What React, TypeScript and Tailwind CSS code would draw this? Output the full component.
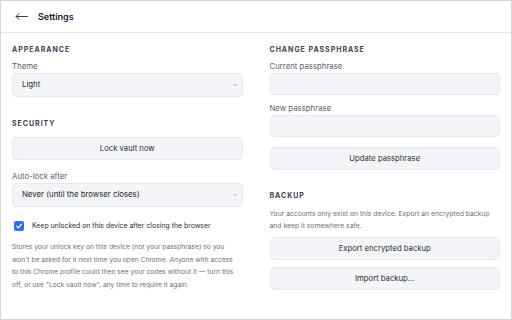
import { ChevronDown } from "lucide-react";

const heading = "text-[7px] font-bold uppercase tracking-[0.14em] leading-[10px] text-[#3d4152]";
const label = "text-[7.8px] leading-[10px] text-[#5b5f6c]";
const field = "w-full rounded-[5px] border border-[#e7e9f0] bg-[#f4f5f9]";
const button =
  "flex h-[23px] w-full items-center justify-center rounded-[5px] border border-[#e7e9f0] bg-[#f4f5f9] text-[7.7px] text-[#2b2e38]";

function Select({ value }: { value: string }) {
  return (
    <div className={`${field} flex h-[24px] items-center justify-between pl-[9px] pr-[4px]`}>
      <span className="text-[7.8px] text-[#23262f]">{value}</span>
      <ChevronDown className="h-[6px] w-[6px] text-[#6b6f7b]" strokeWidth={2} />
    </div>
  );
}

export default function App() {
  return (
    <div
      className="flex h-[320px] w-[512px] flex-col overflow-hidden border border-[#d6d6da] bg-white"
      style={{ fontFamily: "Inter, 'Liberation Sans', sans-serif" }}
    >
      <header className="flex h-[32px] shrink-0 items-center border-b border-[#e6e7ef] pl-[14px]">
        <svg viewBox="0 0 13 7" className="h-[7px] w-[13px]" fill="none">
          <path d="M12.5 3.5H1M4 0.8 1 3.5 4 6.2" stroke="#2a2d3a" strokeWidth="0.9" strokeLinecap="round" strokeLinejoin="round" />
        </svg>
        <h1 className="ml-[10px] text-[9px] font-semibold text-[#1d2030]">Settings</h1>
      </header>

      <main className="grid grid-cols-2 gap-[27px] px-[11px] pt-[12px]">
        <div className="flex flex-col">
          <h2 className={heading}>Appearance</h2>
          <p className={`${label} mt-[6px]`}>Theme</p>
          <div className="mt-[2px]">
            <Select value="Light" />
          </div>

          <h2 className={`${heading} mt-[22px]`}>Security</h2>
          <div className="mt-[8px]">
            <button className={button}>Lock vault now</button>
          </div>
          <p className={`${label} mt-[11px]`}>Auto-lock after</p>
          <div className="mt-[2px]">
            <Select value="Never (until the browser closes)" />
          </div>

          <label className="mt-[14px] flex items-center gap-[8px] pl-[2px]">
            <span className="flex h-[10px] w-[10px] items-center justify-center rounded-[2px] bg-[#2f6fe4]">
              <svg viewBox="0 0 12 12" className="h-[8px] w-[8px]" fill="none">
                <path d="M2.5 6.2 5 8.7 9.6 3.4" stroke="white" strokeWidth="1.8" strokeLinecap="round" strokeLinejoin="round" />
              </svg>
            </span>
            <span className="text-[6.9px] leading-[10px] text-[#2b2e38]">
              Keep unlocked on this device after closing the browser
            </span>
          </label>

          <p className="mt-[10px] text-[6.7px] leading-[12.7px] text-[#6d707c]">
            Stores your unlock key on this device (not your passphrase) so you
            <br />
            won't be asked for it next time you open Chrome. Anyone with access
            <br />
            to this Chrome profile could then see your codes without it — turn this
            <br />
            off, or use "Lock vault now", any time to require it again.
          </p>
        </div>

        <div className="flex flex-col">
          <h2 className={heading}>Change passphrase</h2>
          <p className={`${label} mt-[6px]`}>Current passphrase</p>
          <div className={`${field} mt-[2px] h-[22px]`} />
          <p className={`${label} mt-[8px]`}>New passphrase</p>
          <div className={`${field} mt-[2px] h-[22px]`} />
          <div className="mt-[10px]">
            <button className={button}>Update passphrase</button>
          </div>

          <h2 className={`${heading} mt-[21px]`}>Backup</h2>
          <p className="mt-[7px] text-[6.8px] leading-[11.5px] text-[#6d707c]">
            Your accounts only exist on this device. Export an encrypted backup and keep it somewhere safe.
          </p>
          <div className="mt-[6px]">
            <button className={button}>Export encrypted backup</button>
          </div>
          <div className="mt-[7px]">
            <button className={button}>Import backup…</button>
          </div>
        </div>
      </main>
    </div>
  );
}
